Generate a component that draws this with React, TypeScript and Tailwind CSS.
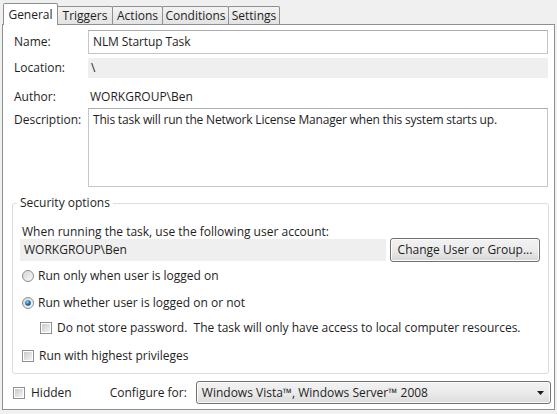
import React, { useId } from 'react';

const Radio = ({ checked }: { checked?: boolean }) => {
  const id = useId().replace(/:/g, '');
  return (
    <svg width="12" height="12" viewBox="0 0 12 12" className="shrink-0">
      <defs>
        <linearGradient id={`rf${id}`} x1="0" y1="0" x2="1" y2="1">
          <stop offset="0" stopColor="#d4d4d4" />
          <stop offset="1" stopColor="#fafafa" />
        </linearGradient>
        <radialGradient id={`rc${id}`} cx="0.4" cy="0.35" r="0.7">
          <stop offset="0" stopColor="#9fd8f6" />
          <stop offset="0.5" stopColor="#1f7ab8" />
          <stop offset="1" stopColor="#0d3d6a" />
        </radialGradient>
      </defs>
      <circle cx="6" cy="6" r="5.5" fill={`url(#rf${id})`} stroke="#8e8f8f" />
      {checked && <circle cx="6" cy="6" r="2.8" fill={`url(#rc${id})`} />}
    </svg>
  );
};

const Check = () => (
  <div className="w-[12px] h-[12px] shrink-0 border border-[#8e8f8f] bg-white p-[1px]">
    <div className="w-full h-full bg-gradient-to-br from-[#cbcbcb] to-[#f4f4f4]" />
  </div>
);

const Tab = ({ label, w }: { label: string; w: string }) => (
  <div
    className={`${w} -ml-px h-[18px] flex items-center justify-center border border-b-0 border-[#8e8f8f] bg-gradient-to-b from-[#f3f3f3] to-[#e3e3e3] rounded-t-[2px]`}
  >
    {label}
  </div>
);

export default function App() {
  return (
    <div className="w-[557px] h-[414px] bg-[#f0f0f0] pt-[3px] pl-[2px] text-[12px] leading-[16px] text-[#1e1e1e] font-['Open_Sans',sans-serif] overflow-hidden">
      {/* tab strip */}
      <div className="flex items-end h-[21px]">
        <div className="relative z-10 ml-[1px] -mb-px w-[55px] h-[22px] flex items-center justify-center border border-b-0 border-[#8e8f8f] bg-white rounded-t-[2px]">
          General
        </div>
        <Tab label="Triggers" w="w-[56px]" />
        <Tab label="Actions" w="w-[51px]" />
        <Tab label="Conditions" w="w-[67px]" />
        <Tab label="Settings" w="w-[52px]" />
      </div>

      {/* panel */}
      <div className="w-[553px] h-[386px] border border-[#8e8f8f] bg-white flex flex-col">
        <div className="flex flex-col pl-[11px]">
          <div className="mt-[5px] h-[24px] flex items-center">
            <span className="w-[74px]">Name:</span>
            <div className="w-[460px] h-[24px] border border-[#c3c6cb] border-t-[#abadb3] pl-[4px] flex items-center tracking-[-0.1px]">
              NLM Startup Task
            </div>
          </div>

          <div className="mt-[4px] h-[20px] flex items-center">
            <span className="w-[74px]">Location:</span>
            <div className="w-[460px] h-[20px] bg-[#efefef] pl-[3px] flex items-center">\</div>
          </div>

          <div className="mt-[8px] h-[22px] flex items-center">
            <span className="w-[74px]">Author:</span>
            <span className="pl-[2px]">WORKGROUP\Ben</span>
          </div>

          <div className="flex">
            <span className="w-[74px] pt-[4px]">Description:</span>
            <div className="w-[460px] h-[79px] border border-[#c3c6cb] border-t-[#abadb3] pl-[4px] pt-[3px] tracking-[-0.2px]">
              This task will run the Network License Manager when this system starts up.
            </div>
          </div>
        </div>

        {/* security options */}
        <fieldset className="ml-[9px] mt-[8px] w-[537px] h-[179px] border border-[#d5dfe5] rounded-[3px] pl-[4px]">
          <legend className="px-[3px] leading-[16px]">Security options</legend>
          <div className="flex flex-col pl-[3px]">
            <div className="mt-[14px] h-[13px] flex items-center ml-[2px]">
              When running the task, use the following user account:
            </div>
            <div className="h-[24px] flex items-center">
              <div className="w-[366px] h-[22px] bg-[#efefef] pl-[4px] flex items-center">WORKGROUP\Ben</div>
              <button className="ml-[4px] w-[150px] h-[24px] border border-[#707070] rounded-[3px] bg-gradient-to-b from-[#f2f2f2] via-[#ebebeb] to-[#d6d6d6] shadow-[inset_0_0_0_1px_#fcfcfc]">
                Change User or Group...
              </button>
            </div>
            <div className="mt-[6px] h-[16px] flex items-center ml-[2px] gap-[4px]">
              <Radio />
              <span>Run only when user is logged on</span>
            </div>
            <div className="mt-[11px] h-[16px] flex items-center ml-[2px] gap-[4px]">
              <Radio checked />
              <span>Run whether user is logged on or not</span>
            </div>
            <div className="mt-[9px] h-[16px] flex items-center ml-[20px] gap-[5px]">
              <Check />
              <span>Do not store password.&nbsp; The task will only have access to local computer resources.</span>
            </div>
            <div className="mt-[12px] h-[16px] flex items-center ml-[2px] gap-[5px]">
              <Check />
              <span>Run with highest privileges</span>
            </div>
          </div>
        </fieldset>

        {/* bottom row */}
        <div className="mt-[7px] h-[23px] flex items-center pl-[10px]">
          <Check />
          <span className="ml-[6px]">Hidden</span>
          <span className="ml-[38px]">Configure for:</span>
          <div className="ml-[9px] w-[355px] h-[23px] border border-[#707070] rounded-[3px] bg-gradient-to-b from-[#f2f2f2] via-[#ebebeb] to-[#dcdcdc] shadow-[inset_0_0_0_1px_#fcfcfc] flex items-center pl-[5px] pr-[6px]">
            <span className="flex-1">Windows Vista™, Windows Server™ 2008</span>
            <svg width="7" height="4" viewBox="0 0 7 4">
              <path d="M0 0h7L3.5 4z" fill="#1e1e1e" />
            </svg>
          </div>
        </div>
      </div>
    </div>
  );
}
